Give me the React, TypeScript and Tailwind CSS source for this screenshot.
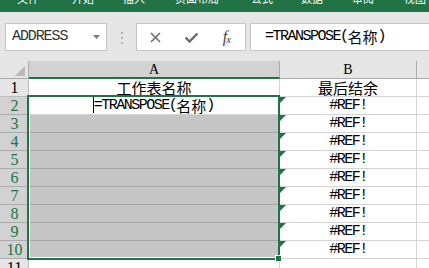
import React from "react";

const S = ({ children, className = "" }: { children: React.ReactNode; className?: string }) => (
  <span className={`font-[family-name:'Liberation_Serif',serif] ${className}`}>{children}</span>
);
const M = ({ children, className = "" }: { children: React.ReactNode; className?: string }) => (
  <span className={`font-[family-name:'Liberation_Mono',monospace] ${className}`}>{children}</span>
);
const C = ({ children, className = "" }: { children: React.ReactNode; className?: string }) => (
  <span className={`font-[family-name:'Noto_Sans_CJK_SC',sans-serif] ${className}`}>{children}</span>
);

function ErrTri() {
  return (
    <svg className="absolute left-0 top-0" width="6" height="6" viewBox="0 0 6 6">
      <polygon points="0,0 6,0 0,6" fill="#217346" />
    </svg>
  );
}

function Row({ n }: { n: number }) {
  const sel = n >= 2 && n <= 10;
  const gray = n >= 3 && n <= 10;
  return (
    <div className="flex h-[18px]">
      <div
        className={`w-[29px] shrink-0 border-r border-b flex items-end justify-center leading-[17px] ${
          sel ? "bg-[#d2d2d2] text-[#217346] border-[#ababab]" : "bg-[#e6e6e6] text-black border-[#bdbdbd]"
        }`}
      >
        <S className="text-[16px] pl-[1px]">{n}</S>
      </div>
      <div
        className={`w-[251px] shrink-0 border-r border-b flex items-end justify-center leading-[17px] text-[15px] text-black ${
          gray ? "bg-[#c6c6c6] border-[#a4a4a4]" : "bg-white border-[#d4d4d4]"
        }`}
      >
        {n === 1 && <C>工作表名称</C>}
        {n === 2 && (
          <span className="flex items-end">
            <span className="inline-block w-[1px] h-[16px] bg-black mb-[1px]" />
            <M className="tracking-[-1.5px]">=TRANSPOSE(</M>
            <C>名称</C>
            <M>)</M>
          </span>
        )}
      </div>
      <div className="relative w-[137px] shrink-0 border-r border-b border-[#d4d4d4] bg-white flex items-end justify-center leading-[17px] text-[15px] text-black">
        {n === 1 && <C>最后结余</C>}
        {sel && (
          <>
            <ErrTri />
            <M className="tracking-[-1.5px]">#REF!</M>
          </>
        )}
      </div>
      <div className="flex-1 border-b border-[#d4d4d4] bg-white" />
    </div>
  );
}

export default function App() {
  const menus = [
    { t: "文件", ml: "ml-[17px]" },
    { t: "开始", ml: "ml-[33px]" },
    { t: "插入", ml: "ml-[29px]" },
    { t: "页面布局", ml: "ml-[30px]" },
    { t: "公式", ml: "ml-[32px]" },
    { t: "数据", ml: "ml-[28px]" },
    { t: "审阅", ml: "ml-[29px]" },
    { t: "视图", ml: "ml-[30px]" },
  ];
  return (
    <div className="relative w-[429px] h-[268px] overflow-hidden bg-[#e6e6e6]">
      {/* ribbon tabs (cut off) */}
      <div className="h-[12px] bg-[#217346] overflow-hidden">
        <div className="flex -mt-[8px] text-white text-[11px] leading-[12px] font-[family-name:'Noto_Sans_CJK_SC',sans-serif] whitespace-nowrap">
          {menus.map((m) => (
            <span key={m.t} className={m.ml}>
              {m.t}
            </span>
          ))}
        </div>
      </div>

      {/* formula bar */}
      <div className="h-[49px] flex items-start pt-[11px] pl-[5px] overflow-hidden">
        <div className="w-[102px] h-[28px] shrink-0 bg-white border border-[#c6c6c6] flex items-center justify-between pl-[6px] pr-[6px]">
          <M className="text-[15px] tracking-[-1.1px] text-[#333]">ADDRESS</M>
          <svg width="7" height="4" viewBox="0 0 7 4">
            <polygon points="0,0 7,0 3.5,4" fill="#7a7a7a" />
          </svg>
        </div>
        <div className="ml-[14px] mt-[9px] flex flex-col gap-[3px] shrink-0">
          <span className="w-[2px] h-[2px] bg-[#b0b0b0]" />
          <span className="w-[2px] h-[2px] bg-[#b0b0b0]" />
          <span className="w-[2px] h-[2px] bg-[#b0b0b0]" />
        </div>
        <div className="ml-[13px] w-[110px] h-[28px] shrink-0 bg-white border border-[#c6c6c6] flex items-center">
          <div className="w-[36px] flex justify-center">
            <svg width="11" height="11" viewBox="0 0 11 11">
              <path d="M1 1 L10 10 M10 1 L1 10" stroke="#6e6e6e" strokeWidth="1.6" />
            </svg>
          </div>
          <div className="w-[36px] flex justify-center">
            <svg width="15" height="11" viewBox="0 0 15 11">
              <path d="M1.5 5.5 L5.5 9.5 L13.5 1.5" stroke="#6a6a6a" strokeWidth="2.4" fill="none" />
            </svg>
          </div>
          <div className="w-[36px] flex justify-center items-end leading-none italic text-[#444]">
            <S className="text-[16px]">f</S>
            <S className="text-[11px] -ml-[1px]">x</S>
          </div>
        </div>
        <div className="ml-[4px] w-[200px] h-[28px] shrink-0 bg-white border border-[#c6c6c6] flex items-center pl-[14px] text-[15px] text-black whitespace-nowrap">
          <M className="tracking-[-1.5px]">=TRANSPOSE(</M>
          <C>名称</C>
          <M>)</M>
        </div>
      </div>

      {/* grid */}
      <div className="relative">
        <div className="flex h-[18px]">
          <div className="relative w-[29px] shrink-0 border-r border-b border-[#ababab] bg-[#e6e6e6]">
            <svg className="absolute left-[15px] top-[5px]" width="10" height="10" viewBox="0 0 10 10">
              <polygon points="10,0 10,10 0,10" fill="#b8b8b8" />
            </svg>
          </div>
          <div className="w-[251px] shrink-0 bg-[#d2d2d2] border-r border-r-[#ababab] border-b-2 border-b-[#217346] flex items-center justify-center">
            <S className="text-[14px] text-black">A</S>
          </div>
          <div className="w-[137px] shrink-0 bg-[#e6e6e6] border-r border-b border-[#ababab] flex items-center justify-center">
            <S className="text-[14px] text-black">B</S>
          </div>
          <div className="flex-1 bg-[#e6e6e6] border-b border-[#ababab]" />
        </div>
        {[1, 2, 3, 4, 5, 6, 7, 8, 9, 10, 11].map((n) => (
          <Row key={n} n={n} />
        ))}

        {/* selection border */}
        <div className="absolute left-[27px] top-[34px] w-[253px] h-[165px] border-2 border-[#217346] pointer-events-none">
          <div className="absolute left-0 top-[18px] bottom-0 w-[1px] bg-white" />
          <div className="absolute left-0 right-0 bottom-0 h-[1px] bg-white" />
        </div>
        {/* fill handle */}
        <div className="absolute left-[275px] top-[194px] w-[7px] h-[7px] bg-[#217346] border border-white" />
      </div>
    </div>
  );
}
